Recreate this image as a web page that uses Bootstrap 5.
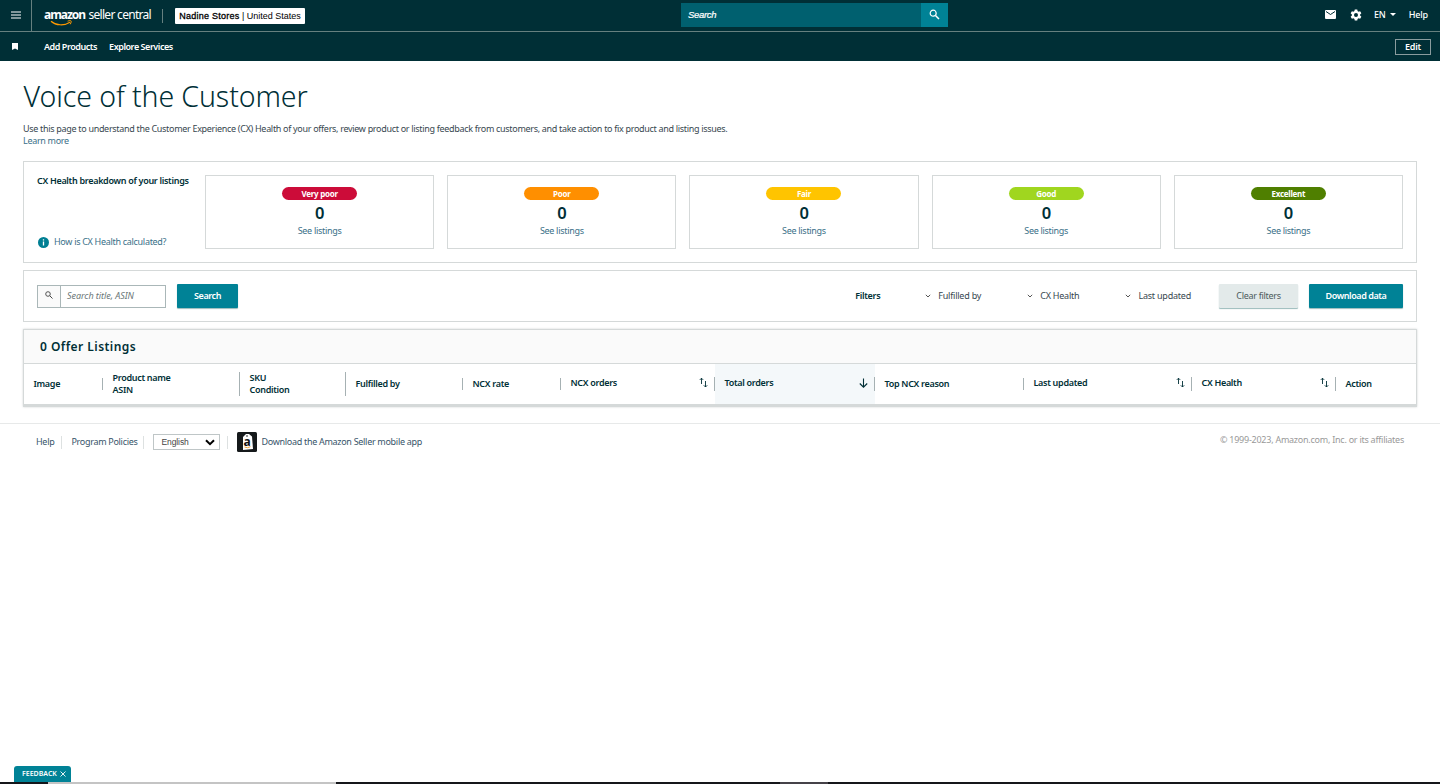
<!DOCTYPE html>
<html lang="en">
<head>
<meta charset="utf-8">
<meta name="viewport" content="width=device-width, initial-scale=1">
<title>Voice of the Customer</title>
<link href="https://cdn.jsdelivr.net/npm/bootstrap@5.3.0/dist/css/bootstrap.min.css" rel="stylesheet">
<style>
  body { font-family: "Noto Sans", "Open Sans", sans-serif; font-size: 9px; line-height: 12px; letter-spacing: -.3px; color: #37474f; min-height: 784px; overflow: hidden; background: #fff; }
  a { text-decoration: none; color: #3a7088; }
  svg { display: block; flex: none; }
  .ink { color: #002f36; }
  .semi { font-weight: 600; }
  .topbar { background: #002f36; height: 61px; color: #fff; }
  .topbar a { color: #fff; }
  .toprow { height: 32px; border-bottom: 1px solid #66807f; }
  .subrow { height: 29px; padding: 0 9px 0 12px; letter-spacing: -.45px; }
  .burger { width: 32px; height: 31px; border-right: 1px solid #66807f; padding-bottom: 2px; }
  .brand { position: relative; margin-left: 12px; width: 106px; font-size: 12px; line-height: 16px; white-space: nowrap; letter-spacing: -.7px; padding-bottom: 2px; }
  .brand b { font-weight: 700; letter-spacing: -1.05px; }
  .brand span { margin-left: 1px; }
  .smile { position: absolute; left: 6px; top: 11px; }
  .vr-line { width: 1px; height: 14px; background: #66807f; margin: 0 12px; }
  .store { width: 130px; height: 16px; background: #fff; color: #000; border-radius: 1px; font: 9px/16px "Liberation Sans", sans-serif; white-space: nowrap; text-align: center; letter-spacing: 0; }
  .store b { font-weight: 400; letter-spacing: .25px; -webkit-text-stroke: .3px #000; }
  .find { width: 267px; height: 24px; margin: 0 0 2px 376px; }
  .find-text { background: #00606f; padding-left: 7px; font: italic 9.5px/24px "Liberation Sans", sans-serif; letter-spacing: -.3px; -webkit-text-stroke: .2px #fff; }
  .find-go { width: 27px; background: #008296; }
  .tools { padding: 0 12px 2px 0; font-weight: 500; letter-spacing: -.15px; }
  .edit { width: 36px; height: 16px; border: 1px solid #8a9c9e; font-weight: 600; line-height: 13px; text-align: center; letter-spacing: -.2px; }
  .page { padding: 0 23px; }
  h1 { font-size: 28.5px; font-weight: 300; line-height: 36px; margin: 17px 0 9px .6px; color: #002f36; letter-spacing: -.1px; }
  .intro { margin-bottom: 14px; letter-spacing: -.31px; }
  .panel { border: 1px solid #d5d9d9; background: #fff; }
  .health { height: 102px; padding: 13px; }
  .health-side { width: 168px; height: 73px; }
  .health-grid { display: grid; grid-template-columns: repeat(5, 1fr); gap: 13px; }
  .score { height: 74px; padding-top: 11px; }
  .pill { width: 75px; height: 13px; border-radius: 7px; color: #fff; font-weight: 700; font-size: 8px; line-height: 13px; letter-spacing: -.25px; }
  .count { font-size: 16.5px; font-weight: 600; line-height: 20px; margin: 3px 0 2px; }
  .very-poor { background: #cc0c39; } .poor { background: #ff8f00; } .fair { background: #ffc400; }
  .good { background: #a0d61f; } .excellent { background: #4f7f00; }
  .filters { height: 52px; margin-top: 7px; padding: 0 13px; }
  .field { width: 129px; height: 23px; border: 1px solid #aab7b8; }
  .field-icon { width: 23px; background: #fafafa; border-right: 1px solid #aab7b8; padding-bottom: 3px; }
  .field-text { padding-left: 6px; font-style: italic; color: #6b7778; line-height: 20px; letter-spacing: -.05px; }
  .act { height: 24px; border-radius: 1px; background: #008296; color: #fff; font-weight: 600; line-height: 24px; text-align: center; box-shadow: 0 1px 1px #9bb; letter-spacing: -.42px; }
  .act.plain { background: #e3eaea; color: #4c5a5c; font-weight: 400; letter-spacing: -.3px; }
  .drop { gap: 7px; letter-spacing: -.22px; }
  .listing { margin-top: 7px; height: 78px; border-bottom: 3px solid #d5d9d9; box-shadow: 0 0 2px #cfd4d4; }
  .listing-title { height: 34px; background: #fafafa; border-bottom: 1px solid #d5d9d9; padding-left: 16px; font-size: 12px; line-height: 33px; font-weight: 600; letter-spacing: .45px; }
  .heads { table-layout: fixed; width: 1392px; height: 40px; border-collapse: collapse; }
  .heads th { padding: 0 0 0 9.5px; font-weight: 600; vertical-align: middle; }
  .heads th > div { border-right: 1px solid #a6b1b3; }
  .heads th:last-child > div { border: 0; }
  .heads .sortable { display: flex; justify-content: space-between; height: 14px; padding-right: 6px; }
  .heads .on { background: #f4f8fa; }
  .foot { border-top: 1px solid #e7e9e9; margin-top: 16px; padding: 8px 36px 0; height: 40px; }
  .foot a { color: #37556a; }
  .foot a:not(:last-child) { padding-bottom: 1px; }
  .bar { width: 1px; height: 13px; background: #dde1e1; }
  .lang { width: 67px; height: 16px; border: 1px solid #bfc6c7; padding: 0 4px 0 7px; font: 8.5px/14px "Liberation Sans", sans-serif; letter-spacing: -.1px; color: #444; }
  .copy { color: #999; letter-spacing: -.25px; }
  .feedback { left: 14px; bottom: 2px; width: 57px; height: 16px; background: #008296; color: #fff; font-size: 7px; font-weight: 600; border-radius: 3px 3px 0 0; padding-left: 8px; gap: 3px; letter-spacing: 0; }
  .edge { height: 2px; background: #15161a; }
  .edge-tab { width: 288px; margin-left: 48px; background: #c4c4c4; }
  .edge-tab2 { width: 48px; margin-left: 444px; background: #454248; }
</style>
</head>
<body>
<header class="topbar">
  <div class="toprow d-flex align-items-center">
    <div class="burger d-flex align-items-center justify-content-center flex-shrink-0"><svg width="10" height="8" viewBox="0 0 10 8"><path d="M0 1h10M0 4h10M0 7h10" stroke="#fff" stroke-width="1.2"/></svg></div>
    <div class="brand"><b>amazon</b> <span>seller central</span>
      <svg class="smile" width="24" height="9" viewBox="0 0 24 9"><path d="M1 3.2C6 7.6 14 8 20 4.2" fill="none" stroke="#f90" stroke-width="1.2"/><path d="M17.6 3.2c2-.8 4-.8 3.6.2 0 1-.4 2-1 2.900" fill="none" stroke="#f90"/></svg>
    </div>
    <div class="vr-line"></div>
    <div class="store"><b>Nadine Stores</b> | United States</div>
    <div class="find d-flex"><div class="find-text flex-grow-1">Search</div>
      <div class="find-go d-flex align-items-center justify-content-center"><svg width="11" height="11" viewBox="0 0 11 11" fill="none" stroke="#fff"><circle cx="4.200" cy="4.200" r="3" stroke-width="1.200"/><path d="M6.500 6.500L10 10" stroke-width="1.500"/></svg></div></div>
    <div class="tools d-flex align-items-center ms-auto">
      <svg width="11" height="9" viewBox="0 0 11 9"><rect width="11" height="9" rx="1" fill="#fff"/><path d="M1 1.500L5.500 4.500 10 1.500" fill="none" stroke="#002f36"/></svg>
      <svg style="margin-left:14px" width="12" height="12" viewBox="0 0 24 24" fill="#fff"><path fill-rule="evenodd" d="M9.500 1h5l.6 3.200 2 1.200 3.100-1.100 2.500 4.300-2.500 2.200v2.400l2.500 2.200-2.500 4.300-3.100-1.100-2 1.200-.6 3.200h-5l-.6-3.200-2-1.200-3.100 1.100-2.500-4.300 2.500-2.200v-2.400L1.300 8.600l2.500-4.300 3.100 1.100 2-1.200zM12 8a4 4 0 1 0 0 8 4 4 0 0 0 0-8z"/></svg>
      <a href="#" class="d-flex align-items-center" style="margin-left:12px">EN <svg class="ms-1" width="6" height="3" viewBox="0 0 6 3"><path d="M0 0h6L3 3z" fill="#fff"/></svg></a>
      <a href="#" style="margin-left:13px">Help</a>
    </div>
  </div>
  <div class="subrow d-flex align-items-center semi">
    <svg width="6" height="7" viewBox="0 0 6 7"><path d="M0 0h6v7L3 5.500 0 7z" fill="#fff"/></svg>
    <a href="#" style="margin-left:26px">Add Products</a><a href="#" style="margin-left:12px">Explore Services</a>
    <div class="edit ms-auto">Edit</div>
  </div>
</header>

<main class="page">
  <h1>Voice of the Customer</h1>
  <div class="intro">Use this page to understand the Customer Experience (CX) Health of your offers, review product or listing feedback from customers, and take action to fix product and listing issues.<br><a href="#">Learn more</a></div>

  <section class="panel health d-flex">
    <div class="health-side d-flex flex-column justify-content-between flex-shrink-0">
      <div class="semi ink">CX Health breakdown of your listings</div>
      <a href="#" class="d-flex align-items-center" style="gap:5px;padding-left:1px"><svg width="11" height="11" viewBox="0 0 11 11"><circle cx="5.500" cy="5.500" r="5.500" fill="#007f93"/><path d="M5.500 4.500v4M5.500 2.300v1.300" stroke="#fff" stroke-width="1.300"/></svg>How is CX Health calculated?</a>
    </div>
    <div class="health-grid flex-grow-1 text-center">
      <div class="panel score"><div class="pill very-poor mx-auto">Very poor</div><div class="count ink">0</div><a href="#">See listings</a></div>
      <div class="panel score"><div class="pill poor mx-auto">Poor</div><div class="count ink">0</div><a href="#">See listings</a></div>
      <div class="panel score"><div class="pill fair mx-auto">Fair</div><div class="count ink">0</div><a href="#">See listings</a></div>
      <div class="panel score"><div class="pill good mx-auto">Good</div><div class="count ink">0</div><a href="#">See listings</a></div>
      <div class="panel score"><div class="pill excellent mx-auto">Excellent</div><div class="count ink">0</div><a href="#">See listings</a></div>
    </div>
  </section>

  <section class="panel filters d-flex align-items-center">
    <div class="field d-flex"><div class="field-icon d-flex align-items-center justify-content-center"><svg width="8" height="8" viewBox="0 0 8 8" fill="none" stroke="#444"><circle cx="3" cy="3" r="2.300" stroke-width=".9"/><path d="M4.800 4.800L7.500 7.500"/></svg></div><div class="field-text">Search title, ASIN</div></div>
    <div class="act" style="width:61px;margin-left:11px">Search</div>
    <div class="semi ink ms-auto pb-px">Filters</div>
    <div class="drop d-flex align-items-center" style="margin-left:45px"><svg width="6" height="4" viewBox="0 0 6 4"><path d="M.8.800L3 3 5.200.800" fill="none" stroke="#555"/></svg>Fulfilled by</div>
    <div class="drop d-flex align-items-center" style="margin-left:46px"><svg width="6" height="4" viewBox="0 0 6 4"><path d="M.8.800L3 3 5.200.800" fill="none" stroke="#555"/></svg>CX Health</div>
    <div class="drop d-flex align-items-center" style="margin-left:46px"><svg width="6" height="4" viewBox="0 0 6 4"><path d="M.8.800L3 3 5.200.800" fill="none" stroke="#555"/></svg>Last updated</div>
    <div class="act plain" style="width:79px;margin-left:28px">Clear filters</div>
    <div class="act" style="width:94px;margin-left:11px">Download data</div>
  </section>

  <section class="panel listing">
    <div class="listing-title ink">0 Offer Listings</div>
    <table class="heads ink">
      <colgroup><col style="width:79px"><col style="width:137px"><col style="width:106px"><col style="width:117px"><col style="width:98px"><col style="width:154px"><col style="width:160px"><col style="width:149px"><col style="width:168px"><col style="width:144px"><col style="width:80px"></colgroup>
      <tr>
        <th><div>Image</div></th>
        <th><div>Product name<br>ASIN</div></th>
        <th><div>SKU<br>Condition</div></th>
        <th><div>Fulfilled by</div></th>
        <th><div>NCX rate</div></th>
        <th><div class="sortable">NCX orders<svg width="9" height="11" viewBox="0 0 9 11" fill="none" stroke="#002f36" stroke-width=".9"><path d="M2.500 7V1.200M.8 2.900l1.700-1.700 1.700 1.700M6.500 4v6M4.800 8.300L6.500 10l1.700-1.700"/></svg></div></th>
        <th class="on"><div class="sortable">Total orders<svg width="9" height="12" viewBox="0 0 9 12" fill="none" stroke="#002f36" stroke-width="1.100"><path d="M4.500 1.500v8.500M.8 6.500l3.700 3.700 3.700-3.700"/></svg></div></th>
        <th><div>Top NCX reason</div></th>
        <th><div class="sortable">Last updated<svg width="9" height="11" viewBox="0 0 9 11" fill="none" stroke="#002f36" stroke-width=".9"><path d="M2.500 7V1.200M.8 2.900l1.700-1.700 1.700 1.700M6.500 4v6M4.800 8.300L6.500 10l1.700-1.700"/></svg></div></th>
        <th><div class="sortable">CX Health<svg width="9" height="11" viewBox="0 0 9 11" fill="none" stroke="#002f36" stroke-width=".9"><path d="M2.500 7V1.200M.8 2.900l1.700-1.700 1.700 1.700M6.500 4v6M4.800 8.300L6.500 10l1.700-1.700"/></svg></div></th>
        <th><div>Action</div></th>
      </tr>
    </table>
  </section>
</main>

<footer class="foot d-flex align-items-start">
  <div class="d-flex align-items-center" style="height:20px">
    <a href="#">Help</a><div class="bar" style="margin:0 9px 0 7px"></div>
    <a href="#">Program Policies</a><div class="bar" style="margin:0 9px 0 6px"></div>
    <div class="lang d-flex align-items-center justify-content-between">English <svg width="10" height="7" viewBox="0 0 10 7"><path d="M1 1.200l4 4 4-4" fill="none" stroke="#000" stroke-width="2"/></svg></div>
    <div class="bar" style="margin:0 9px 0 7px"></div>
    <svg width="20" height="20" viewBox="0 0 20 20"><rect width="20" height="20" rx="1.500" fill="#15191b"/><path d="M6 5l3-3h3l3 2.500L16 17l-10 1z" fill="#fff"/><circle cx="10" cy="4" r=".8" fill="#15191b"/><text x="6.600" y="13.500" font-family="Noto Sans, sans-serif" font-weight="700" font-size="12" fill="#111">a</text><path d="M7.500 15q3 1.500 6-.3" stroke="#f4a63a" fill="none"/></svg>
    <a href="#" style="margin-left:4px">Download the Amazon Seller mobile app</a>
  </div>
  <div class="copy ms-auto" style="padding-top:2px">© 1999-2023, Amazon.com, Inc. or its affiliates</div>
</footer>

<div class="feedback position-fixed d-flex align-items-center">FEEDBACK <svg width="6" height="6" viewBox="0 0 6 6"><path d="M.5.500l5 5M5.500.500l-5 5" stroke="#fff" stroke-width=".9"/></svg></div>
<div class="edge fixed-bottom d-flex"><div class="edge-tab"></div><div class="edge-tab2"></div></div>
<script src="https://cdn.jsdelivr.net/npm/bootstrap@5.3.0/dist/js/bootstrap.bundle.min.js"></script>
</body>
</html>
